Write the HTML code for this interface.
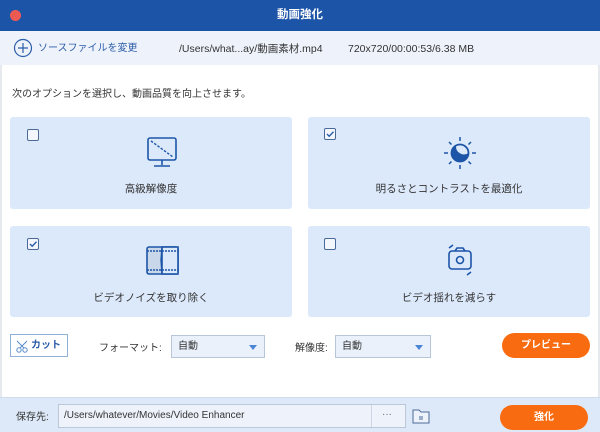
<!DOCTYPE html>
<html><head><meta charset="utf-8"><style>
*{margin:0;padding:0;box-sizing:border-box}
body{width:600px;height:432px;overflow:hidden;background:#fff;font-family:"Liberation Sans","Noto Sans CJK JP",sans-serif;position:relative;color:#333}
.abs{position:absolute}
.title{left:0;top:0;width:600px;height:31px;background:#1c55a7;color:#fff;font-size:11.5px;font-weight:bold;text-align:center;line-height:31px}
.dot{left:10px;top:10px;width:11px;height:11px;border-radius:50%;background:#ee5a52}
.src{left:0;top:31px;width:600px;height:34px;background:#eef3fb;font-size:10.5px;line-height:34px}
.card{background:#dce9fb;border-radius:3px;width:282px}
.cb{width:12px;height:12px;border:1px solid #4a6a98;background:#f3f7fd;border-radius:2px}
.lbl{font-size:10.5px;text-align:center;width:282px;color:#333}
.sel{height:23px;border:1px solid #b8c6da;background:#eaf1fb;font-size:10px;line-height:21px;padding-left:6px}
.tri{width:0;height:0;border-left:4px solid transparent;border-right:4px solid transparent;border-top:5px solid #4a86d4}
.btn{background:#f96b10;color:#fff;font-size:10px;text-align:center;border-radius:13px;font-weight:bold}
</style></head><body>
<div class="abs title">動画強化</div>
<div class="abs dot"></div>
<div class="abs src">
 <svg class="abs" style="left:13px;top:7px" width="20" height="20"><circle cx="10" cy="10" r="8.5" fill="none" stroke="#2c5da8" stroke-width="1.2"/><path d="M10 5v10M5 10h10" stroke="#2c5da8" stroke-width="1.2"/></svg>
 <span class="abs" style="left:38px;top:1px;color:#2c5da8;font-size:10px">ソースファイルを変更</span>
 <span class="abs" style="left:179px;top:1px">/Users/what...ay/動画素材.mp4</span>
 <span class="abs" style="left:348px;top:1px">720x720/00:00:53/6.38 MB</span>
</div>
<div class="abs" style="left:12px;top:85px;font-size:10px">次のオプションを選択し、動画品質を向上させます。</div>
<div class="abs" style="left:0;top:65px;width:2px;height:332px;background:#e6e9ee"></div>
<div class="abs" style="right:0;top:65px;width:2px;height:332px;background:#e6e9ee"></div>

<div class="abs card" style="left:10px;top:117px;height:92px"></div>
<div class="abs card" style="left:308px;top:117px;height:92px"></div>
<div class="abs card" style="left:10px;top:226px;height:91px"></div>
<div class="abs card" style="left:308px;top:226px;height:91px"></div>
<div class="abs cb" style="left:27px;top:129px"></div>
<div class="abs cb" style="left:324px;top:128px"><svg width="10" height="10" style="position:absolute;left:0;top:0"><path d="M2 5l2.2 2.2L8.5 2.8" fill="none" stroke="#2c5da8" stroke-width="1.4"/></svg></div>
<div class="abs cb" style="left:27px;top:238px"><svg width="10" height="10" style="position:absolute;left:0;top:0"><path d="M2 5l2.2 2.2L8.5 2.8" fill="none" stroke="#2c5da8" stroke-width="1.4"/></svg></div>
<div class="abs cb" style="left:324px;top:238px"></div>

<svg class="abs" style="left:145px;top:136px" width="34" height="34"><rect x="3" y="2" width="28" height="22" rx="2" fill="none" stroke="#1c55a7" stroke-width="1.6"/><path d="M6 5L28 21" stroke="#1c55a7" stroke-width="1.4" stroke-dasharray="2.5 1.5"/><path d="M17 24v5M9 30h16" stroke="#1c55a7" stroke-width="1.6"/></svg>
<svg class="abs" style="left:440px;top:133px" width="40" height="40"><circle cx="20" cy="20" r="8.5" fill="none" stroke="#1c55a7" stroke-width="1.8"/><path d="M12.5 24.5A8.5 8.5 0 0 0 28.5 20A8 8 0 0 1 16 13A8.5 8.5 0 0 0 12.5 24.5z" fill="#1c55a7"/><path d="M20 4v4M20 32v4M4 20h4M32 20h4M9 9l2.5 2.5M31 9l-2.5 2.5M9 31l2.5-2.5M31 31l-2.5-2.5" stroke="#1c55a7" stroke-width="1.5"/></svg>
<svg class="abs" style="left:145px;top:245px" width="36" height="32"><rect x="2" y="2" width="31" height="27" rx="2" fill="#c9d7ea" stroke="#1c55a7" stroke-width="1.6"/><rect x="17" y="2" width="16" height="27" fill="#dce9fb" stroke="#1c55a7" stroke-width="1.6"/><path d="M2 6h31M2 25h31" stroke="#1c55a7" stroke-width="1.4" stroke-dasharray="2 1"/><path d="M17 2l-1 13 1 14" stroke="#1c55a7" stroke-width="1.4" fill="none"/></svg>
<svg class="abs" style="left:440px;top:241px" width="40" height="36"><path d="M9 7l4-3M31 31l-4 3" stroke="#1c55a7" stroke-width="1.6"/><rect x="9" y="10" width="22" height="18" rx="3" fill="none" stroke="#1c55a7" stroke-width="1.6"/><path d="M15 10l2-3h6l2 3" fill="none" stroke="#1c55a7" stroke-width="1.6"/><circle cx="20" cy="19" r="3.5" fill="none" stroke="#1c55a7" stroke-width="1.6"/></svg>

<div class="abs lbl" style="left:10px;top:181px">高級解像度</div>
<div class="abs lbl" style="left:308px;top:181px">明るさとコントラストを最適化</div>
<div class="abs lbl" style="left:10px;top:290px">ビデオノイズを取り除く</div>
<div class="abs lbl" style="left:308px;top:290px">ビデオ揺れを減らす</div>

<div class="abs" style="left:10px;top:334px;width:58px;height:23px;border:1px solid #8fb0d8;background:#fff;font-size:10px;color:#2c5da8;font-weight:bold;line-height:21px;padding-left:20px">カット<svg class="abs" style="left:5px;top:5px" width="13" height="13"><circle cx="3" cy="10" r="2.2" fill="none" stroke="#5a8ccc"/><circle cx="9" cy="10" r="2.2" fill="none" stroke="#5a8ccc"/><path d="M4 8L11 1M8 8L1 1" stroke="#5a8ccc"/></svg></div>
<div class="abs" style="left:99px;top:339px;font-size:10px">フォーマット:</div>
<div class="abs sel" style="left:171px;top:335px;width:94px">自動<div class="abs tri" style="right:7px;top:9px"></div></div>
<div class="abs" style="left:295px;top:339px;font-size:10px">解像度:</div>
<div class="abs sel" style="left:335px;top:335px;width:96px">自動<div class="abs tri" style="right:7px;top:9px"></div></div>
<div class="abs btn" style="left:502px;top:333px;width:88px;height:25px;line-height:25px">プレビュー</div>

<div class="abs" style="left:0;top:397px;width:600px;height:35px;background:#dde9f8;border-top:1px solid #cfdcee"></div>
<div class="abs" style="left:16px;top:408px;font-size:10px">保存先:</div>
<div class="abs" style="left:58px;top:404px;width:348px;height:24px;border:1px solid #bcc8d8;background:#eef3fb;font-size:10px;line-height:22px;padding-left:5px">/Users/whatever/Movies/Video Enhancer<div class="abs" style="left:312px;top:0;width:1px;height:22px;background:#cdd6e2"></div><span class="abs" style="left:323px;top:-1px;color:#666">···</span></div>
<svg class="abs" style="left:411px;top:407px" width="20" height="18"><path d="M2 3h6l2 2h8v11H2z" fill="#eef3fb" stroke="#4a6a98"/><path d="M8 10h4M8 12h4" stroke="#4a6a98"/></svg>
<div class="abs btn" style="left:500px;top:405px;width:88px;height:25px;line-height:25px">強化</div>
</body></html>
